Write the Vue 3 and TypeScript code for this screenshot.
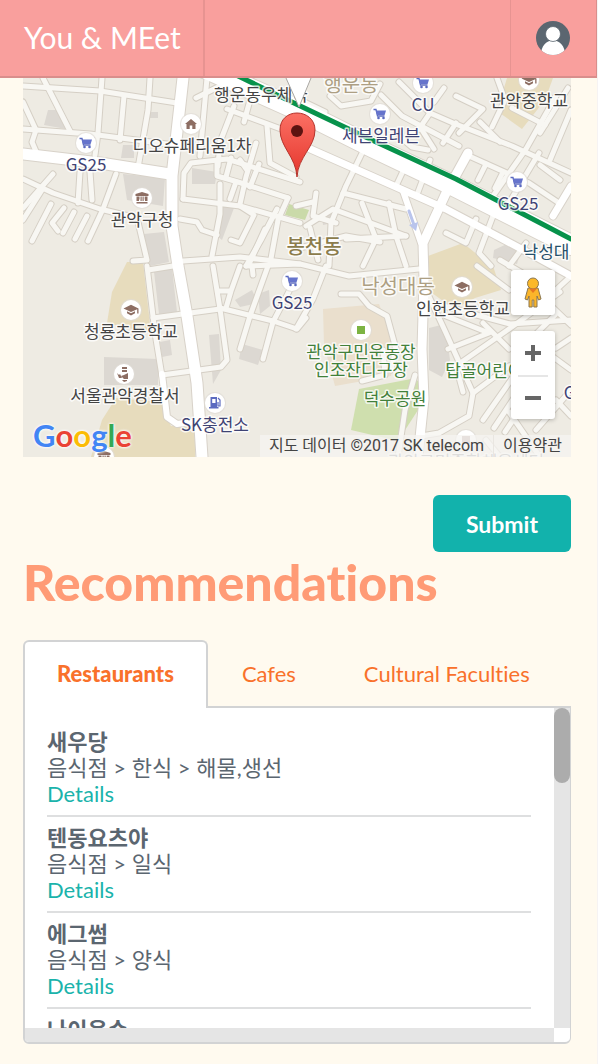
<script setup lang="ts">
import { computed, ref } from 'vue'

type IconName = 'cart' | 'home' | 'hall' | 'school' | 'police' | 'gas' | 'park' | 'box'
interface Pin { x: number; y: number; icon: IconName }
interface Label { x: number; y: number; text: string; kind: string }
interface Place { name: string; category: string }
interface Tab { id: string; title: string; places: Place[] }

const minorRoads: string[] = [
  'M23 86L100 91L177 103', 'M23 129L90 134L167 144', 'M43 78L70 131', 'M23 102L36 130L32 142L38 156',
  'M102 78L98 133L95 155', 'M150 78L148 110L138 168', 'M124 96L120 140', 'M196 98L236 78M218 78L240 90',
  'M23 179L53 193L100 209L133 217', 'M80 172L78 203', 'M90 172L92 200', 'M116 174L103 209L88 241',
  'M53 174L23 208', 'M42 190L23 220', 'M51 204L32 241', 'M64 208L52 223L58 231', 'M74 212L63 233', 'M87 216L75 239',
  'M207 78L200 156', 'M183 199L184 173L191 163L227 159L300 182', 'M183 199L240 206L300 223',
  'M217 160L217 176L238 182L288 198', 'M220 184L220 214L212 256', 'M180 219L197 222L202 230L217 235',
  'M183 261L240 257L300 264', 'M227 109L300 136M234 106L220 142L218 166', 'M267 126L270 163L296 177',
  'M250 100L244 122M256 143L246 177L240 204', 'M231 158L226 177M240 160L247 170M259 164L250 187M236 182L230 199',
  'M240 206L254 215L240 243L231 240', 'M277 209L261 240L246 266', 'M265 229L250 262', 'M288 198L278 220L270 264',
  'M133 261L147 260L138 222', 'M147 266L155 333L162 376', 'M148 270L173 266', 'M153 318L220 309',
  'M213 266L220 309L227 360L221 367L162 375', 'M220 291L231 291L240 266M231 291L226 308',
  'M220 308L273 321L297 329L306 318', 'M268 266L250 316L240 349', 'M297 276L273 322L263 359', 'M252 266L253 275',
  'M246 266L300 264L349 276L419 269', 'M300 100L325 112M330 96L341 106L371 101L380 84', 'M381 95L402 116L459 146',
  'M399 82L430 113L453 123L512 146L571 173', 'M459 133L483 109L456 96M444 88L434 102', 'M497 78L505 100L492 127',
  'M556 96L526 149L493 196', 'M539 153L509 203', 'M571 110L550 160', 'M568 88L540 133',
  'M469 156L529 183L559 203', 'M430 113L419 129M456 123L443 143', 'M420 127L434 149M400 137L412 147L428 150',
  'M480 122L500 142M512 108L545 125M540 165L560 180', 'M486 164L478 180M503 172L495 188',
  'M364 149L346 186L331 223L329 266', 'M404 169L396 186', 'M343 193L406 209', 'M316 193L313 216L336 223',
  'M296 206L313 202M306 226L333 209L406 236', 'M346 239L406 236M363 266L376 239L362 203', 'M389 203L396 236L406 266',
  'M296 249L346 236L380 242M310 228L318 260', 'M493 216L479 253L491 266', 'M446 233L466 243L476 219', 'M509 266L526 243',
  'M430 160L418 192', 'M326 266L313 299L296 329', 'M341 294L359 294L369 306L387 316L396 349L391 370',
  'M426 290L446 333L473 393L469 416L439 433L421 436', 'M448 349L489 333L446 316', 'M436 304L510 324L571 320',
  'M560 292L509 329L456 366L463 392', 'M483 323L509 349', 'M509 366L473 393', 'M520 367L483 420M530 374L494 428M540 380L505 432',
  'M509 412L540 457M536 430L571 390', 'M571 276L545 300L571 325M555 315L530 340L571 370', 'M556 348L571 338M556 400L571 416M486 440L500 457',
  'M477 266L509 290M500 260L548 288', 'M415 375L405 410L398 457', 'M362 381L385 375L383 350',
]
const majorRoads = [
  { d: 'M183 78L172 176L172 226L178 266L187 316L197 383L202 457', w: 11 },
  { d: 'M23 154L100 163L170 174', w: 11 },
  { d: 'M200 66L296 109L372 147L454 186L571 245', w: 20 },
  { d: 'M290 140L403 190L446 209L529 253L571 276', w: 7 },
  { d: 'M468 153L446 193L423 243L424 280L422 349L424 399L418 457', w: 9 },
  { d: 'M571 186L553 216', w: 7 },
  { d: 'M403 191L421 243', w: 6 },
  { d: 'M162 374L167 417L177 424L200 421', w: 6 },
]
const buildings: string[] = [
  'M48 110H62L66 129L44 125Z', 'M123 174L165 178L163 206L127 200Z', 'M144 234L164 232L169 262L150 266Z',
  'M192 168L217 172L215 184L192 184Z', 'M221 205L234 208L222 240L217 236Z', 'M154 272L172 268L177 312L159 314Z',
  'M104 357L158 359L158 385H104Z', 'M160 342L170 340L172 355L162 357Z', 'M209 335L219 334L221 370L213 384Z',
  'M242 344L263 350L258 365L239 359Z', 'M149 112H158V118H148Z', 'M235 300L252 290L258 303L240 307Z',
  'M429 328L445 324L450 360L442 377L429 370Z', 'M494 250L511 242L521 250L517 264L493 258Z', 'M258 294L269 290L270 306L260 314Z',
  'M322 215L331 209L333 223L323 225Z', 'M123 145H134V158H121Z',
]
const yards: string[] = [
  'M127 262L143 262L151 333L107 323L112 292Z', 'M116 398L161 402L171 426L195 426V457H91L102 420Z',
  'M507 78H553L545 100L522 129L497 111Z', 'M428 256L463 243L479 256L493 266L501 290L475 298L454 309L428 290Z',
]
const pins: Pin[] = [
  { x: 86, y: 143, icon: 'cart' }, { x: 191, y: 124, icon: 'home' }, { x: 142, y: 198, icon: 'hall' },
  { x: 423, y: 83, icon: 'cart' }, { x: 380, y: 114, icon: 'cart' }, { x: 529, y: 80, icon: 'school' },
  { x: 517, y: 182, icon: 'cart' }, { x: 292, y: 281, icon: 'cart' }, { x: 131, y: 310, icon: 'school' },
  { x: 124, y: 374, icon: 'police' }, { x: 215, y: 403, icon: 'gas' }, { x: 361, y: 330, icon: 'park' },
  { x: 462, y: 287, icon: 'school' }, { x: 104, y: 457, icon: 'hall' }, { x: 466, y: 440, icon: 'box' },
]
const labels: Label[] = [
  { x: 261, y: 101, text: '행운동우체국', kind: 'poi' }, { x: 351, y: 92, text: '행운동', kind: 'area' },
  { x: 423, y: 111, text: 'CU', kind: 'shop' }, { x: 529, y: 107, text: '관악중학교', kind: 'poi' },
  { x: 381, y: 142, text: '세븐일레븐', kind: 'shop' }, { x: 86, y: 171, text: 'GS25', kind: 'shop' },
  { x: 192, y: 152, text: '디오슈페리움1차', kind: 'poi' }, { x: 142, y: 226, text: '관악구청', kind: 'poi' },
  { x: 518, y: 210, text: 'GS25', kind: 'shop' }, { x: 314, y: 254, text: '봉천동', kind: 'area strong' },
  { x: 546, y: 258, text: '낙성대', kind: 'station' }, { x: 292, y: 309, text: 'GS25', kind: 'shop' },
  { x: 398, y: 294, text: '낙성대동', kind: 'area' }, { x: 463, y: 315, text: '인헌초등학교', kind: 'poi' },
  { x: 131, y: 338, text: '청룡초등학교', kind: 'poi' }, { x: 361, y: 358, text: '관악구민운동장', kind: 'park' },
  { x: 361, y: 376, text: '인조잔디구장', kind: 'park' }, { x: 395, y: 405, text: '덕수공원', kind: 'park' },
  { x: 500, y: 377, text: '탑골어린이공원', kind: 'park' }, { x: 125, y: 402, text: '서울관악경찰서', kind: 'poi' },
  { x: 215, y: 431, text: 'SK충전소', kind: 'shop' }, { x: 584, y: 399, text: 'GS25', kind: 'shop' },
  { x: 466, y: 468, text: '관악구민종합체육센터', kind: 'faint' },
]

const tabs: Tab[] = [
  {
    id: 'restaurants',
    title: 'Restaurants',
    places: [
      { name: '새우당', category: '음식점 > 한식 > 해물,생선' },
      { name: '텐동요츠야', category: '음식점 > 일식' },
      { name: '에그썸', category: '음식점 > 양식' },
      { name: '나이옥수', category: '음식점 > 한식' },
    ],
  },
  { id: 'cafes', title: 'Cafes', places: [] },
  { id: 'culture', title: 'Cultural Faculties', places: [] },
]
const activeId = ref('restaurants')
const places = computed(() => tabs.find((t) => t.id === activeId.value)?.places ?? [])
</script>

<template>
  <div class="page">
    <header class="topbar">
      <a class="brand" href="#">You &amp; MEet</a>
      <button class="account" type="button" aria-label="Account">
        <svg viewBox="0 0 34 34" width="34" height="34">
          <defs><clipPath id="avatar"><circle cx="17" cy="17" r="17" /></clipPath></defs>
          <g clip-path="url(#avatar)">
            <rect width="34" height="34" fill="#5b6670" />
            <path d="M5 34C5 25 10 19.500 17 19.500S29 25 29 34Z" fill="#fff" />
            <circle cx="17" cy="13" r="7.500" fill="#fff" stroke="#5b6670" stroke-width=".8" />
          </g>
        </svg>
      </button>
    </header>

    <main class="content">
      <section class="map" aria-label="Map">
        <svg class="map-canvas" viewBox="23 78 548 379" preserveAspectRatio="xMidYMid slice">
          <defs>
            <linearGradient id="pinFill" x1="0" y1="0" x2="0" y2="1">
              <stop offset="0" stop-color="#fb7064" /><stop offset="1" stop-color="#e5352c" />
            </linearGradient>
            <g id="cart">
              <path d="M-6.500 -4.500H-4L-2.500 2H4.500" fill="none" stroke="#5c6bc0" stroke-width="1.300" />
              <path d="M-4.200 -3.500H6L4.600 1H-3Z" fill="#6674cc" />
              <circle cx="-1.500" cy="4" r="1.300" fill="#5c6bc0" /><circle cx="3.500" cy="4" r="1.300" fill="#5c6bc0" />
            </g>
            <path id="home" d="M0 -5L6 0H4.500V5H1.300V1.500H-1.300V5H-4.500V0H-6Z" fill="#8d6e63" />
            <path id="hall" d="M0 -6L6.500 -4V-2H-6.500V-4ZM-5.500 -1.500H-2.500V1.500H-3V3H-5.500ZM-1.500 -1.500H-.3V3H-1.500ZM.5 -1.500H1.700V3H.5ZM2.700 -1.500H5.500V3H3V1.500H2.700ZM-5.500 4H5.500V5.500H-5.500Z" fill="#8d6e63" />
            <path id="school" d="M-7.500 -1.500L0 -5.200L7.500 -1.500V3.500H6.200V-.8L0 2ZM-4 1.200L0 3.200L4 1.200V3.200L0 5.500L-4 3.200Z" fill="#8d6e63" />
            <path id="police" d="M-2 -7H3V-5H-2ZM-2 -4H3V-2H-2ZM4 -1V5H0L-3 2L0 1ZM-7 -1L-5 1L-4 0L-2 4H-5ZM-2 6H3V7L0 8Z" fill="#8d6e63" />
            <g id="gas">
              <path d="M-4.500 -6H2V4H3.500V5.500H-6V4H-4.500ZM-2.800 -4V0H.5V-4Z" fill="#5c6bc0" fill-rule="evenodd" />
              <path d="M3 -5L5 -3V3H3V-1" fill="none" stroke="#5c6bc0" stroke-width="1.200" />
            </g>
            <rect id="park" x="-4" y="-4" width="8" height="8" fill="#7cb342" />
            <rect id="box" x="-4" y="-4" width="8" height="8" fill="#bba9a5" />
          </defs>

          <rect x="23" y="78" width="548" height="379" fill="#eeebe3" />
          <path d="M323 309L379 304L396 349L391 376L335 386L324 345Z" fill="#eadfcd" />
          <path d="M359 389L411 379L419 381L418 410L398 441L351 430Z" fill="#cfdfae" />
          <path d="M289 204L309 210L305 220L285 215Z" fill="#cadaa9" />
          <path v-for="d in yards" :key="d" :d="d" fill="#e7dcbd" />
          <path v-for="d in buildings" :key="d" :d="d" fill="#dcd8d2" />
          <g fill="none" stroke-linecap="round" stroke-linejoin="round">
            <path v-for="d in minorRoads" :key="d" :d="d" stroke="#d5cfc5" stroke-width="7" />
            <path v-for="r in majorRoads" :key="r.d" :d="r.d" stroke="#d8d2c9" :stroke-width="r.w + 2" />
            <path v-for="d in minorRoads" :key="d" :d="d" stroke="#f8f7f3" stroke-width="5" />
            <path v-for="r in majorRoads" :key="r.d" :d="r.d" stroke="#fff" :stroke-width="r.w" />
            <path d="M234 74L296 104L374 141L456 179L571 239" stroke="#07924b" stroke-width="5" />
            <path d="M409 211L414 225" stroke="#b9c4ec" stroke-width="3" />
          </g>
          <path d="M409 225L418 222L416 231Z" fill="#b9c4ec" />

          <g v-for="p in pins" :key="`${p.x}-${p.y}`">
            <circle :cx="p.x" :cy="p.y" r="11" fill="#dfdcd6" opacity=".7" />
            <circle :cx="p.x" :cy="p.y" r="10" fill="#fff" />
            <use :href="`#${p.icon}`" :x="p.x" :y="p.y" />
          </g>
          <text v-for="l in labels" :key="`${l.x}-${l.y}`" :x="l.x" :y="l.y" :class="['label', l.kind]">{{ l.text }}</text>

          <path d="M286 78H311L299 107Z" fill="#fff" />
          <path d="M286 78L299 107L311 78" fill="none" stroke="#a9a7a3" stroke-width="1" />
          <path d="M297 177C296 157 280 147 280 130C280 119 288 113 297 113S315 119 315 130C315 147 298 157 297 177Z" fill="url(#pinFill)" stroke="#b5332b" stroke-width="1" />
          <circle cx="297" cy="131" r="6" fill="#5c1310" />
        </svg>

        <a class="google" href="#" aria-label="Google">
          <span class="blue">G</span><span class="red">o</span><span class="yellow">o</span><span class="blue">g</span><span class="green">l</span><span class="red">e</span>
        </a>
        <div class="controls">
          <button class="pegman" type="button" aria-label="Street View">
            <svg viewBox="0 0 20 32" width="20" height="32">
              <path d="M5 11H15L18 22L15.500 23L14 19V30H10.800V23H9.200V30H6V19L4.500 23L2 22Z" fill="#fbb52a" stroke="#8b7750" stroke-width="1" />
              <circle cx="10" cy="6.500" r="5.500" fill="#fbb829" stroke="#8b7750" stroke-width="1" />
              <path d="M6 11.500H14L10 16Z" fill="#e87722" />
            </svg>
          </button>
          <div class="zoom">
            <button type="button" aria-label="Zoom in">
              <svg viewBox="0 0 18 18" width="18" height="18"><path d="M9 1V17M1 9H17" stroke="#666" stroke-width="4" /></svg>
            </button>
            <button type="button" aria-label="Zoom out">
              <svg viewBox="0 0 18 18" width="18" height="18"><path d="M1 9H17" stroke="#666" stroke-width="4" /></svg>
            </button>
          </div>
        </div>
        <div class="attribution">
          <span>지도 데이터 ©2017 SK telecom</span>
          <a href="#">이용약관</a>
        </div>
      </section>

      <div class="actions"><button class="submit" type="button">Submit</button></div>

      <h1>Recommendations</h1>

      <div class="tabs" role="tablist">
        <button
          v-for="t in tabs" :id="`tab-${t.id}`" :key="t.id" type="button" role="tab" aria-controls="places"
          :aria-selected="t.id === activeId" :class="['tab', { active: t.id === activeId }]" @click="activeId = t.id"
        >{{ t.title }}</button>
      </div>
      <section id="places" class="panel" role="tabpanel" :aria-labelledby="`tab-${activeId}`">
        <ul class="places">
          <li v-for="p in places" :key="p.name">
            <strong>{{ p.name }}</strong>
            <span>{{ p.category }}</span>
            <a href="#">Details</a>
          </li>
        </ul>
        <div class="track"><div class="thumb"></div></div>
        <div class="track"></div>
      </section>
    </main>
  </div>
</template>

<style>
body { background: #fffaef; }
</style>

<style scoped>
* { box-sizing: border-box; }
.page { min-height: 100vh; border-right: 1px solid #f6f3f3; font-family: Lato, "Noto Sans CJK KR", sans-serif; font-variant-ligatures: none; color: #5b6670; }
button { font: inherit; font-variant-ligatures: none; border: 0; padding: 0; background: none; cursor: pointer; }
a { text-decoration: none; }
.topbar { display: flex; justify-content: space-between; height: 78px; background: #f99f9d; border-bottom: 2px solid #d98e8c; border-right: 1px solid #d98e8c; }
.brand { display: flex; align-items: center; padding: 0 24px 3px; width: 205px; border-right: 2px solid #e79391; color: #fff; font-size: 30px; white-space: nowrap; }
.account { display: flex; align-items: center; justify-content: center; width: 86px; padding-right: 2px; border-left: 1px solid #e79391; }
.content { padding: 0 26px 20px 23px; }

.map { position: relative; }
.map-canvas { display: block; width: 100%; }
.label { font-family: "Noto Sans CJK KR", sans-serif; font-size: 17px; text-anchor: middle; fill: #444; stroke: #fff; stroke-width: 3px; stroke-opacity: .8; paint-order: stroke; stroke-linejoin: round; }
.shop { fill: #3f4374; }
.park { fill: #41803a; }
.station { fill: #25506a; }
.area { fill: #ad9f83; font-size: 20px; }
.strong { fill: #8b7c4c; font-weight: 500; }
.faint { fill: #999; }
.google { position: absolute; left: 10px; bottom: 2px; font: 700 31px/40px Lato, sans-serif; display: flex; text-shadow: 0 0 3px #fff, 0 0 3px #fff; }
.blue { color: #4285f4; }
.red { color: #ea4335; }
.yellow { color: #fbbc05; }
.green { color: #34a853; }
.controls { position: absolute; right: 16px; bottom: 38px; width: 44px; display: grid; gap: 16px; }
.pegman, .zoom { background: #fff; border-radius: 3px; box-shadow: 0 1px 4px rgba(0, 0, 0, .25); }
.pegman { height: 45px; display: grid; place-items: center; }
.zoom { padding: 0 7px; }
.zoom button { display: grid; place-items: center; width: 100%; height: 44px; }
.zoom button + button { border-top: 2px solid #e6e6e6; }
.attribution { position: absolute; right: 0; bottom: 0; display: flex; font: 16px/22px Roboto, "Noto Sans CJK KR", sans-serif; color: #444; background: rgba(245, 244, 242, .75); white-space: nowrap; }
.attribution > * { padding: 0 9px; color: inherit; }
.attribution a { border-left: 1px solid #e9e6e1; }

.actions { display: flex; justify-content: flex-end; margin-top: 38px; }
.submit { padding: 0 33px; height: 57px; border-radius: 6px; background: #12b2ac; color: #fff; font-size: 23px; font-weight: 700; }
h1 { margin: 0 0 28px; font-size: 50px; line-height: 60px; font-weight: 900; color: #ff9b76; }

.tabs { display: flex; }
.tab { height: 68px; padding: 0 32px 4px; border: 2px solid transparent; border-bottom: 0; border-radius: 6px 6px 0 0; color: #f9712b; font-size: 22px; white-space: nowrap; }
.active { position: relative; z-index: 1; background: #fff; border-color: #d2d3d4; font-weight: 900; }
.panel { display: grid; grid-template-columns: 1fr 16px; grid-template-rows: 320px 14px; margin-top: -2px; background: #fff; border: 2px solid #d2d3d4; border-right-width: 1px; border-radius: 0 0 6px 6px; overflow: hidden; }
.places { margin: 0; padding: 13px 23px 0 22px; list-style: none; overflow: hidden; font-size: 22px; line-height: 26px; }
.places li { padding: 8px 0; border-bottom: 2px solid #dedfe0; }
.places strong, .places span, .places a { display: block; }
.places a { color: #1ab3ab; }
.track { background: #e5e5e5; }
.thumb { height: 75px; border-radius: 8px; background: #acacac; }
</style>
